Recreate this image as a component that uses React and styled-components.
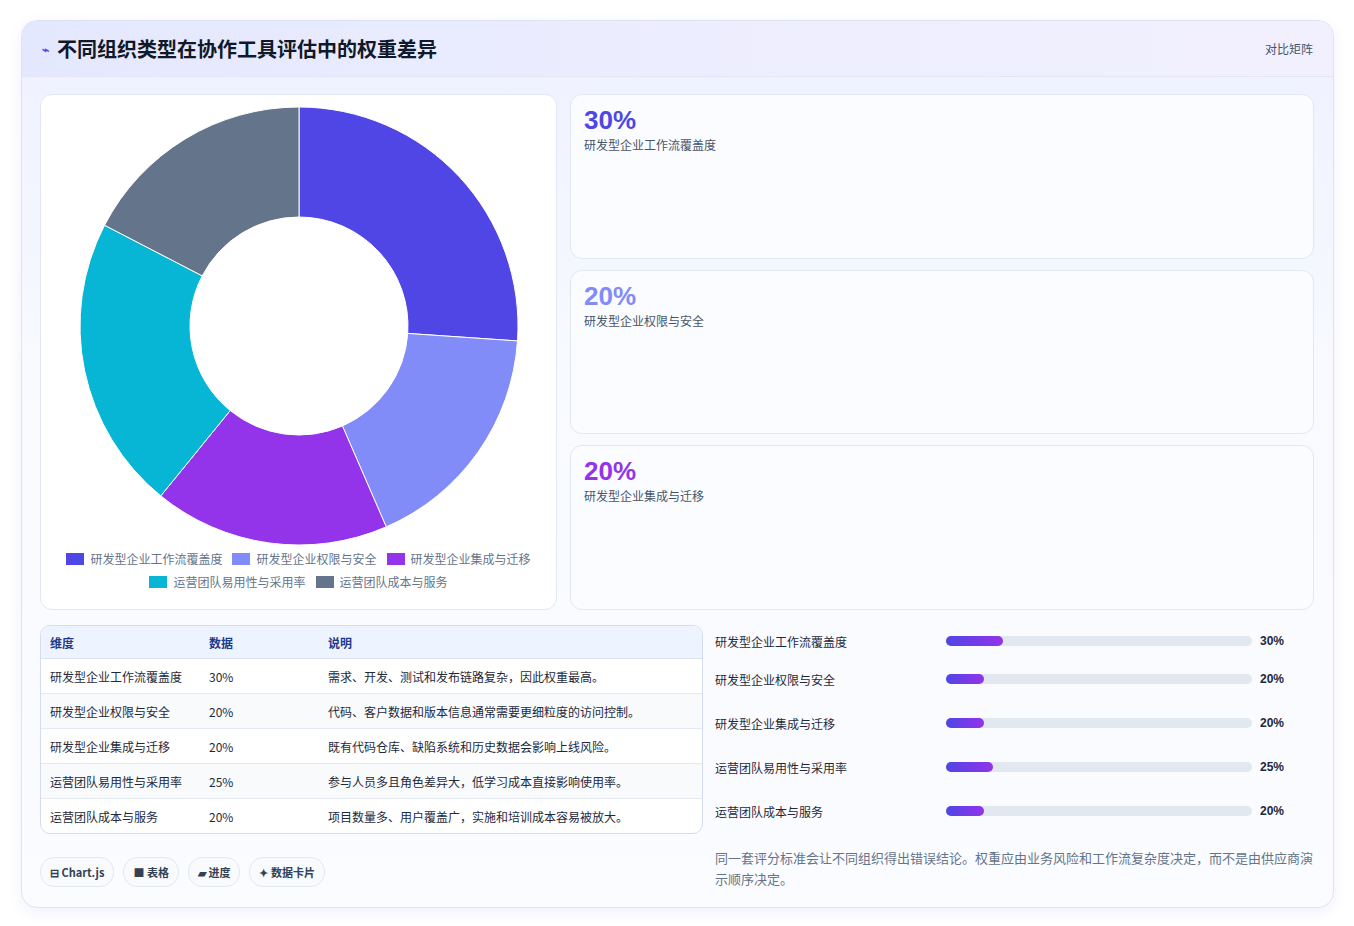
import styled, { createGlobalStyle } from 'styled-components';

const Global = createGlobalStyle`
  body { margin: 0; background: #fff; font-family: "Noto Sans CJK SC", "Noto Sans", sans-serif; color: #1e293b; }
`;

const data = [
  { label: '研发型企业工作流覆盖度', value: 30, color: '#4f46e5', note: '需求、开发、测试和发布链路复杂，因此权重最高。' },
  { label: '研发型企业权限与安全', value: 20, color: '#818cf8', note: '代码、客户数据和版本信息通常需要更细粒度的访问控制。' },
  { label: '研发型企业集成与迁移', value: 20, color: '#9333ea', note: '既有代码仓库、缺陷系统和历史数据会影响上线风险。' },
  { label: '运营团队易用性与采用率', value: 25, color: '#06b6d4', note: '参与人员多且角色差异大，低学习成本直接影响使用率。' },
  { label: '运营团队成本与服务', value: 20, color: '#64748b', note: '项目数量多、用户覆盖广，实施和培训成本容易被放大。' },
];

const Page = styled.div`
  padding: 20px 20px 20px 21px;
`;

const Card = styled.div`
  border: 1px solid #dde3f5;
  border-radius: 16px;
  background: linear-gradient(180deg, #eef0ff 0%, #f8faff 40%, #fbfcff 100%);
  box-shadow: 0 4px 14px rgba(79, 70, 229, 0.08);
  overflow: hidden;
`;

const Header = styled.div`
  height: 55px;
  display: flex;
  align-items: center;
  justify-content: space-between;
  padding: 0 20px;
  background: linear-gradient(90deg, #e4e8ff, #eeeefe 60%, #f2f0fe);
  border-bottom: 1px solid #e2e6f5;
`;

const Title = styled.h1`
  margin: 0;
  font-size: 20px;
  font-weight: 700;
  color: #111827;
  display: flex;
  align-items: center;
  gap: 8px;
`;

const Tag = styled.span`
  font-size: 12px;
  color: #475569;
`;

const Body = styled.div`
  padding: 17px 19px 18px 18px;
  display: flex;
  flex-direction: column;
  gap: 15px;
`;

const Row = styled.div`
  display: grid;
  grid-template-columns: ${p => p.$cols};
  column-gap: ${p => p.$gap}px;
`;

const Panel = styled.div`
  background: #fff;
  border: 1px solid #e2e8f0;
  border-radius: 12px;
`;

const ChartPanel = styled(Panel)`
  height: 516px;
  display: flex;
  flex-direction: column;
  align-items: center;
  padding-top: 11px;
  box-sizing: border-box;
`;

const Legend = styled.div`
  display: flex;
  flex-wrap: wrap;
  justify-content: center;
  gap: 6px 10px;
  width: 480px;
  margin-top: 4px;
`;

const LegendItem = styled.span`
  display: flex;
  align-items: center;
  gap: 6px;
  font-size: 12px;
  color: #64748b;
  &::before {
    content: '';
    width: 18px;
    height: 12px;
    background: ${p => p.$c};
  }
`;

const Stats = styled.div`
  display: grid;
  grid-template-rows: repeat(3, 1fr);
  gap: 11px;
`;

const Stat = styled(Panel)`
  background: #fafcff;
  padding: 9px 13px;
`;

const StatValue = styled.div`
  font-family: "Liberation Sans", sans-serif;
  font-size: 26px;
  font-weight: 700;
  color: ${p => p.$c};
  line-height: 32px;
`;

const StatLabel = styled.div`
  font-size: 12px;
  color: #475569;
`;

const TableCol = styled.div`
  display: flex;
  flex-direction: column;
  gap: 23px;
`;

const Table = styled.table`
  width: 100%;
  border-collapse: separate;
  border-spacing: 0;
  border: 1px solid #d6dcef;
  border-radius: 10px;
  overflow: hidden;
  font-size: 12px;
  background: #fff;
  th {
    text-align: left;
    background: #eef4ff;
    color: #1e3a8a;
    font-weight: 600;
    height: 32px;
    padding: 0 9px;
    border-bottom: 1px solid #dbe3f3;
  }
  td {
    height: 34px;
    padding: 0 9px;
    color: #1e293b;
    white-space: nowrap;
    border-bottom: 1px solid #e5e9f2;
  }
  tr:nth-child(even) td { background: #f8fafc; }
  tr:last-child td { border-bottom: none; }
`;

const Chips = styled.div`
  display: flex;
  gap: 9px;
`;

const Chip = styled.span`
  border: 1px solid #e2e8f0;
  border-radius: 14px;
  background: #f8fafc;
  padding: 6px 9px;
  font-size: 11px;
  font-weight: 600;
  color: #334155;
`;

const Bars = styled.div`
  display: flex;
  flex-direction: column;
`;

const BarRow = styled.div`
  display: grid;
  grid-template-columns: 223px 306px 1fr;
  align-items: center;
  gap: 8px;
  height: 44px;
  font-size: 12px;
  &:first-child { height: 32px; }
`;

const Track = styled.div`
  height: 10px;
  border-radius: 5px;
  background: #e2e8f0;
`;

const Fill = styled.div`
  height: 100%;
  border-radius: 5px;
  background: linear-gradient(90deg, #4f46e5, #9333ea);
`;

const Pct = styled.span`
  font-weight: 700;
  font-family: "Liberation Sans", sans-serif;
`;

const Note = styled.p`
  margin: 14px 0 0;
  font-size: 13px;
  line-height: 21px;
  color: #64748b;
`;

function Donut() {
  const total = data.reduce((s, d) => s + d.value, 0);
  const cx = 220, cy = 220, R = 219, r = 109;
  let a = -Math.PI / 2;
  const pt = (rad, ang) => `${cx + rad * Math.cos(ang)} ${cy + rad * Math.sin(ang)}`;
  return (
    <svg width="440" height="440" viewBox="0 0 440 440">
      {data.map(d => {
        const a0 = a, a1 = a + (d.value / total) * Math.PI * 2;
        a = a1;
        const large = a1 - a0 > Math.PI ? 1 : 0;
        return (
          <path key={d.label} fill={d.color} stroke="#fff" strokeWidth="1"
            d={`M ${pt(R, a0)} A ${R} ${R} 0 ${large} 1 ${pt(R, a1)} L ${pt(r, a1)} A ${r} ${r} 0 ${large} 0 ${pt(r, a0)} Z`} />
        );
      })}
    </svg>
  );
}

export default function App() {
  return (
    <Page>
      <Global />
      <Card>
        <Header>
          <Title><span style={{ color: '#4f46e5', fontSize: 12 }}>⌁</span>不同组织类型在协作工具评估中的权重差异</Title>
          <Tag>对比矩阵</Tag>
        </Header>
        <Body>
          <Row $cols="517px 1fr" $gap={13}>
            <ChartPanel>
              <Donut />
              <Legend>
                {data.map(d => <LegendItem key={d.label} $c={d.color}>{d.label}</LegendItem>)}
              </Legend>
            </ChartPanel>
            <Stats>
              {data.slice(0, 3).map(d => (
                <Stat key={d.label}>
                  <StatValue $c={d.color}>{d.value}%</StatValue>
                  <StatLabel>{d.label}</StatLabel>
                </Stat>
              ))}
            </Stats>
          </Row>
          <Row $cols="663px 1fr" $gap={12}>
            <TableCol>
              <Table>
                <thead><tr><th style={{ width: 141 }}>维度</th><th style={{ width: 101 }}>数据</th><th>说明</th></tr></thead>
                <tbody>
                  {data.map(d => (
                    <tr key={d.label}><td>{d.label}</td><td>{d.value}%</td><td>{d.note}</td></tr>
                  ))}
                </tbody>
              </Table>
              <Chips>
                <Chip>⊟ Chart.js</Chip>
                <Chip>■ 表格</Chip>
                <Chip>▰ 进度</Chip>
                <Chip>✦ 数据卡片</Chip>
              </Chips>
            </TableCol>
            <Bars>
              {data.map(d => (
                <BarRow key={d.label}>
                  <span>{d.label}</span>
                  <Track><Fill style={{ width: `${d.value * 0.62}%` }} /></Track>
                  <Pct>{d.value}%</Pct>
                </BarRow>
              ))}
              <Note>同一套评分标准会让不同组织得出错误结论。权重应由业务风险和工作流复杂度决定，而不是由供应商演示顺序决定。</Note>
            </Bars>
          </Row>
        </Body>
      </Card>
    </Page>
  );
}
